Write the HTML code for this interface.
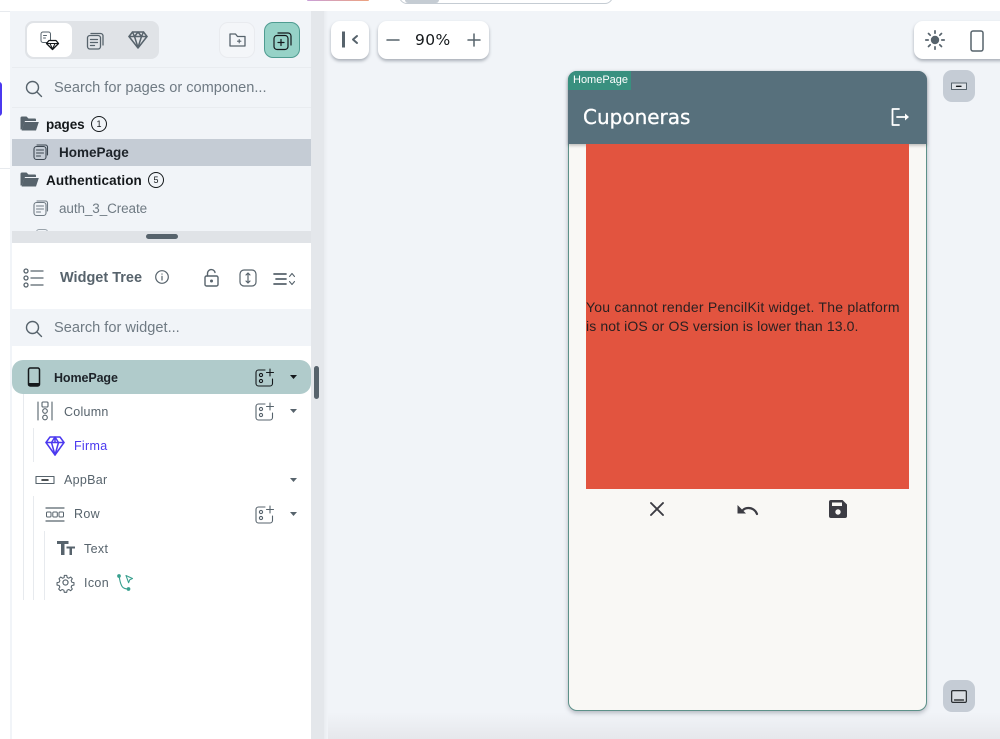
<!DOCTYPE html>
<html lang="en">
<head>
<meta charset="utf-8">
<title>Cuponeras</title>
<style>
html,body{margin:0;padding:0;}
body{width:1000px;height:739px;position:relative;overflow:hidden;background:#f1f4f8;font-family:"Liberation Sans",sans-serif;color:#14181b;}
.a{position:absolute;}
.t{position:absolute;white-space:nowrap;line-height:1;}
svg{position:absolute;overflow:visible;fill:none;stroke-linecap:round;stroke-linejoin:round;}
.card{position:absolute;background:#fff;border-radius:9px;box-shadow:0 2px 3px rgba(60,70,85,.4);}
</style>
</head>
<body>
<!-- top bar -->
<div class="a" style="left:0;top:0;width:1000px;height:11px;background:#fff"></div>
<div class="a" style="left:307px;top:0;width:62px;height:1px;background:linear-gradient(90deg,#c9a0d8,#eda27f);border-radius:0 0 5px 5px"></div>
<div class="a" style="left:399px;top:-12px;width:214px;height:16px;border:1px solid #c5ccd3;border-radius:9px;background:#fff;box-sizing:border-box"></div>
<div class="a" style="left:405px;top:0;width:34px;height:3px;background:#c5ccd3;border-radius:0 0 6px 6px"></div>
<!-- left rail -->
<div class="a" style="left:0;top:0;width:10px;height:739px;background:#fff"></div>
<div class="a" style="left:10px;top:11px;width:2px;height:728px;background:#f1f4f8"></div>
<div class="a" style="left:-6px;top:82px;width:8px;height:34px;background:#4b39ef;border-radius:3px"></div>
<div class="a" style="left:0;top:11px;width:10px;height:1px;background:#e7eaee"></div>
<div class="a" style="left:0;top:168px;width:10px;height:1px;background:#e7eaee"></div>
<div class="t" style="left:-3px;top:175px;font-size:11px;color:#333">t</div>
<!-- panel top -->
<div class="a" style="left:12px;top:11px;width:299px;height:232px;background:#f1f4f8"></div>
<div class="a" style="left:12px;top:67px;width:299px;height:1px;background:#e9ecf0"></div>
<div class="a" style="left:12px;top:107px;width:299px;height:1px;background:#e9ecf0"></div>
<!-- tab group -->
<div class="a" style="left:25px;top:21px;width:134px;height:38px;background:#e0e3e7;border-radius:8px"></div>
<div class="a" style="left:27px;top:23px;width:45px;height:34px;background:#fff;border-radius:7px"></div>
<svg style="left:40px;top:31px" width="20" height="20" viewBox="0 0 20 20" stroke="#57636c" stroke-width="1">
 <rect x="1" y="1" width="9.5" height="10.5" rx="2"/><path d="M3.500 4.500h3M3.500 7h2"/>
 <path d="M9 9.500h7l2.500 3-6 6-6-6z" stroke="#14181b" fill="#fff" stroke-width="1.300"/><path d="M6.500 12.500h12M10 12.500l2.500 5.500 2.500-5.500" stroke="#14181b"/>
</svg>
<svg style="left:86px;top:31px" width="20" height="20" viewBox="0 0 20 20" stroke="#57636c" stroke-width="1.300">
 <path d="M5 2.500h9.500a2.500 2.500 0 0 1 2.500 2.500v9"/><rect x="1.500" y="4.500" width="13" height="13.500" rx="2.500"/><path d="M4.500 8.500h7M4.500 11.500h7M4.500 14.500h4"/>
</svg>
<svg style="left:128px;top:31px" width="20" height="18" viewBox="0 0 20 18" stroke="#57636c" stroke-width="1.500">
 <path d="M4.500 1h11l3.500 4.500-9 11.500-9-11.500z"/><path d="M1 5.500h18M6.500 5.500l3.500 11 3.500-11M4.500 1l2 4.500 3.500-4.500 3.500 4.500 2-4.500"/>
</svg>
<!-- folder plus -->
<div class="a" style="left:219px;top:22px;width:36px;height:36px;box-sizing:border-box;border:1px solid #e9ebef;border-radius:9px;background:#f4f6f9"></div>
<svg style="left:229px;top:33px" width="17" height="14" viewBox="0 0 17 14" stroke="#57636c" stroke-width="1.300">
 <path d="M1 1h5.500l2 2.500H16v9.500H1z"/><path d="M8.500 8.200h3.400M10.200 6.500v3.400" stroke-width="1.100"/>
</svg>
<!-- page plus -->
<div class="a" style="left:264px;top:22px;width:36px;height:36px;box-sizing:border-box;border:1.500px solid #4f9c91;border-radius:9px;background:#96d2c7"></div>
<svg style="left:273px;top:32px" width="19" height="18" viewBox="0 0 19 18" stroke="#14181b" stroke-width="1.200">
 <path d="M5 1h10a3 3 0 0 1 3 3v9"/><rect x="1" y="3.500" width="14" height="14" rx="3"/><path d="M5 10.500h6M8 7.500v6"/>
</svg>
<!-- search -->
<svg style="left:25px;top:80px" width="18" height="18" viewBox="0 0 18 18" stroke="#57636c" stroke-width="1.400"><circle cx="7.500" cy="7.500" r="6"/><path d="M12 12l4.500 4.500"/></svg>
<div class="t" style="left:54px;top:81px;font-size:14.600px;color:#6f7a83">Search for pages or componen...</div>
<!-- pages tree -->
<svg style="left:20px;top:116px" width="19" height="15" viewBox="0 0 19 15"><path d="M0.500 2a1.500 1.500 0 0 1 1.500-1.500h4.500l2 2h6.500a1 1 0 0 1 1 1v1.500H5l-3 8.500h-1.500z" fill="#57636c"/><path d="M4.500 6h14.300l-2.800 8.500H1.600z" fill="#57636c"/></svg>
<div class="t" style="left:46px;top:118px;font-size:13.500px;font-weight:bold;color:#14181b;letter-spacing:-.1px">pages</div>
<div class="a" style="left:91px;top:116px;width:16px;height:16px;box-sizing:border-box;border:1.200px solid #14181b;border-radius:50%;font-size:9px;line-height:14px;text-align:center">1</div>
<div class="a" style="left:12px;top:139px;width:299px;height:27px;background:#c5ccd5"></div>
<svg style="left:33px;top:144px" width="16" height="16" viewBox="0 0 16 16" stroke="#3c4650" stroke-width="1.100"><path d="M4 1h8.500a2 2 0 0 1 2 2v8"/><rect x="1" y="2.500" width="12" height="13" rx="2.500"/><path d="M3.500 6h7M3.500 9h7M3.500 12h4"/></svg>
<div class="t" style="left:59px;top:146px;font-size:13.500px;font-weight:bold;color:#1d2329">HomePage</div>
<svg style="left:20px;top:172px" width="19" height="15" viewBox="0 0 19 15"><path d="M0.500 2a1.500 1.500 0 0 1 1.500-1.500h4.500l2 2h6.500a1 1 0 0 1 1 1v1.500H5l-3 8.500h-1.500z" fill="#57636c"/><path d="M4.500 6h14.300l-2.800 8.500H1.600z" fill="#57636c"/></svg>
<div class="t" style="left:46px;top:174px;font-size:13.500px;font-weight:bold;color:#14181b;letter-spacing:.1px">Authentication</div>
<div class="a" style="left:148px;top:172px;width:16px;height:16px;box-sizing:border-box;border:1.200px solid #14181b;border-radius:50%;font-size:9px;line-height:14px;text-align:center">5</div>
<svg style="left:33px;top:200px" width="16" height="16" viewBox="0 0 16 16" stroke="#6f7a83" stroke-width="1.100"><path d="M4 1h8.500a2 2 0 0 1 2 2v8"/><rect x="1" y="2.500" width="12" height="13" rx="2.500"/><path d="M3.500 6h7M3.500 9h7M3.500 12h4"/></svg>
<div class="t" style="left:59px;top:202px;font-size:13.500px;color:#6f7a83;letter-spacing:-.1px">auth_3_Create</div>
<div class="a" style="left:36px;top:229px;width:12px;height:4px;box-sizing:border-box;border:1px solid #9aa3ab;border-bottom:0;border-radius:3px 3px 0 0"></div>
<!-- divider -->
<div class="a" style="left:12px;top:231px;width:299px;height:12px;background:#e0e3e7"></div>
<div class="a" style="left:146px;top:234px;width:32px;height:5px;background:#57636c;border-radius:3px"></div>
<!-- panel bottom -->
<div class="a" style="left:12px;top:243px;width:299px;height:496px;background:#fff"></div>
<!-- widget tree head -->
<svg style="left:23px;top:268px" width="21" height="20" viewBox="0 0 21 20" stroke="#57636c" stroke-width="1.300"><circle cx="3" cy="3" r="2"/><circle cx="3" cy="10" r="2"/><circle cx="3" cy="17" r="2"/><path d="M8 3h12M8 10h12M8 17h12"/></svg>
<div class="t" style="left:60px;top:271px;font-size:14.500px;font-weight:bold;color:#57636c;letter-spacing:0">Widget Tree</div>
<svg style="left:155px;top:270px" width="14" height="14" viewBox="0 0 14 14" stroke="#57636c" stroke-width="1.200"><circle cx="7" cy="7" r="6.300"/><path d="M7 6.300v3.700M7 4v.1"/></svg>
<svg style="left:204px;top:269px" width="15" height="18" viewBox="0 0 15 18" stroke="#57636c" stroke-width="1.400"><rect x="1" y="7" width="13" height="10" rx="1.500"/><path d="M3.500 7V4.500a3.800 3.800 0 0 1 7.500-1"/><circle cx="7.500" cy="12" r=".8" fill="#57636c"/></svg>
<svg style="left:239px;top:269px" width="18" height="18" viewBox="0 0 18 18" stroke="#57636c" stroke-width="1.200"><rect x="1" y="1" width="16" height="16" rx="4"/><path d="M9 4v10M7 6l2-2 2 2M7 12l2 2 2-2"/></svg>
<svg style="left:273px;top:272px" width="22" height="14" viewBox="0 0 22 14" stroke="#57636c" stroke-width="1.700"><path d="M1 2h12M3 7h10M1 12h12"/><path d="M16.500 4.500l2.500-3 2.500 3M16.500 9.500l2.500 3 2.500-3" stroke-width="1.100"/></svg>
<!-- widget search -->
<div class="a" style="left:12px;top:309px;width:299px;height:37px;background:#f1f4f8"></div>
<svg style="left:25px;top:320px" width="18" height="18" viewBox="0 0 18 18" stroke="#57636c" stroke-width="1.400"><circle cx="7.500" cy="7.500" r="6"/><path d="M12 12l4.500 4.500"/></svg>
<div class="t" style="left:54px;top:321px;font-size:14.600px;color:#6f7a83">Search for widget...</div>
<!-- tree lines -->
<div class="a" style="left:23px;top:394px;width:1px;height:206px;background:#e7eaee"></div>
<div class="a" style="left:33px;top:428px;width:1px;height:34px;background:#e7eaee"></div>
<div class="a" style="left:33px;top:496px;width:1px;height:104px;background:#e7eaee"></div>
<div class="a" style="left:44px;top:531px;width:1px;height:69px;background:#e7eaee"></div>
<!-- HomePage row -->
<div class="a" style="left:12px;top:360px;width:299px;height:34px;background:#b0cbcb;border-radius:11px"></div>
<svg style="left:27px;top:367px" width="14" height="20" viewBox="0 0 14 20"><rect x="1.500" y="1" width="11" height="18" rx="1.800" stroke="#14181b" stroke-width="1.500"/><path d="M1.500 16h11v1.500a1.500 1.500 0 0 1-1.500 1.500H3a1.500 1.500 0 0 1-1.500-1.500z" fill="#14181b"/></svg>
<div class="t" style="left:54px;top:372px;font-size:12.500px;font-weight:bold;color:#1d2329;letter-spacing:-.1px">HomePage</div>
<!-- add widget icons -->
<svg style="left:255px;top:368px" width="19" height="19" viewBox="0 0 19 19" stroke="#14181b" stroke-width="1.100"><path d="M10 2H3.500A2.500 2.500 0 0 0 1 4.500v11A2.500 2.500 0 0 0 3.500 18H15a2.500 2.500 0 0 0 2.500-2.500V11"/><circle cx="6" cy="7" r="1.600"/><circle cx="6" cy="13" r="1.600"/><path d="M15 1v7M11.500 4.500h7"/></svg>
<svg style="left:255px;top:402px" width="19" height="19" viewBox="0 0 19 19" stroke="#57636c" stroke-width="1.100"><path d="M10 2H3.500A2.500 2.500 0 0 0 1 4.500v11A2.500 2.500 0 0 0 3.500 18H15a2.500 2.500 0 0 0 2.500-2.500V11"/><circle cx="6" cy="7" r="1.600"/><circle cx="6" cy="13" r="1.600"/><path d="M15 1v7M11.500 4.500h7"/></svg>
<svg style="left:255px;top:505px" width="19" height="19" viewBox="0 0 19 19" stroke="#57636c" stroke-width="1.100"><path d="M10 2H3.500A2.500 2.500 0 0 0 1 4.500v11A2.500 2.500 0 0 0 3.500 18H15a2.500 2.500 0 0 0 2.500-2.500V11"/><circle cx="6" cy="7" r="1.600"/><circle cx="6" cy="13" r="1.600"/><path d="M15 1v7M11.500 4.500h7"/></svg>
<!-- carets -->
<svg style="left:290px;top:375px" width="7" height="4" viewBox="0 0 7 4"><path d="M0 0h7L3.500 4z" fill="#14181b"/></svg>
<svg style="left:290px;top:409px" width="7" height="4" viewBox="0 0 7 4"><path d="M0 0h7L3.500 4z" fill="#57636c"/></svg>
<svg style="left:290px;top:478px" width="7" height="4" viewBox="0 0 7 4"><path d="M0 0h7L3.500 4z" fill="#57636c"/></svg>
<svg style="left:290px;top:512px" width="7" height="4" viewBox="0 0 7 4"><path d="M0 0h7L3.500 4z" fill="#57636c"/></svg>
<!-- Column -->
<svg style="left:37px;top:401px" width="16" height="20" viewBox="0 0 16 20" stroke="#57636c" stroke-width="1.100"><path d="M1 1v18M15 1v18"/><rect x="5" y="1" width="6" height="5" rx="1"/><circle cx="8" cy="10" r="2.300"/><circle cx="8" cy="16.500" r="2.300"/></svg>
<div class="t" style="left:64px;top:406px;font-size:12.500px;color:#57636c;letter-spacing:.25px">Column</div>
<!-- Firma -->
<svg style="left:45px;top:436px" width="20" height="20" viewBox="0 0 20 20" stroke="#4b39ef" stroke-width="1.500"><path d="M5 1h10l4 5.500-9 12.500L1 6.500z"/><path d="M1 6.500h18M6.500 6.500L10 19l3.500-12.500M10 1v5.500M6.500 6.500L10 1l3.500 5.500"/></svg>
<div class="t" style="left:74px;top:440px;font-size:12.500px;color:#4b39ef;letter-spacing:.3px">Firma</div>
<!-- AppBar -->
<svg style="left:35px;top:475px" width="20" height="10" viewBox="0 0 20 10"><rect x="1" y="1.500" width="18" height="7" stroke="#57636c" stroke-width="1.100"/><path d="M7 5h6" stroke="#14181b" stroke-width="1.500"/></svg>
<div class="t" style="left:64px;top:474px;font-size:12.500px;color:#57636c;letter-spacing:.3px">AppBar</div>
<!-- Row -->
<svg style="left:45px;top:507px" width="20" height="15" viewBox="0 0 20 15" stroke="#57636c" stroke-width="1"><path d="M1 1h18M1 14h18" stroke-width="1.200"/><rect x="1.500" y="5" width="4.500" height="5" rx="1"/><rect x="7.800" y="5" width="4.500" height="5" rx="1"/><rect x="14" y="5" width="4.500" height="5" rx="1"/></svg>
<div class="t" style="left:74px;top:508px;font-size:12.500px;color:#57636c;letter-spacing:.35px">Row</div>
<!-- Text -->
<svg style="left:57px;top:541px" width="18" height="14" viewBox="0 0 18 14"><path d="M0 0h11.500v3H7.500v11H4V3H0z" fill="#57636c"/><path d="M9.500 5.500h8.500v2h-3v6.500h-2.500V7.500h-3z" fill="#57636c"/></svg>
<div class="t" style="left:84px;top:543px;font-size:12.500px;color:#57636c;letter-spacing:.35px">Text</div>
<!-- Icon -->
<svg style="left:56px;top:573px" width="19" height="19" viewBox="0 0 24 24" stroke="#57636c" stroke-width="1.500"><circle cx="12" cy="12" r="3.200"/><path d="M10.300 2h3.400l.6 3 2.300 1 2.600-1.700 2.400 2.400-1.700 2.600 1 2.300 3 .6v3.400l-3 .6-1 2.300 1.700 2.600-2.400 2.400-2.600-1.700-2.300 1-.6 3h-3.400l-.6-3-2.300-1-2.600 1.700-2.400-2.400 1.700-2.600-1-2.300-3-.6v-3.400l3-.6 1-2.300L2.900 6.700l2.400-2.400 2.600 1.700 2.300-1z" transform="translate(1.200 1.200) scale(.9)"/></svg>
<div class="t" style="left:84px;top:577px;font-size:12.500px;color:#57636c;letter-spacing:.35px">Icon</div>
<svg style="left:117px;top:574px" width="17" height="17" viewBox="0 0 17 17" stroke="#39a08f" stroke-width="1.100"><circle cx="2" cy="2" r="1.300" fill="#39a08f"/><circle cx="11.500" cy="15" r="1.300" fill="#39a08f"/><path d="M2 2c1 4 1 8 3.500 11 1.500 1.700 3.500 2 6 2"/><path d="M9 1.500l6.500 3-2.700 1.200-1.200 3z"/></svg>
<!-- scrollbar / separator -->
<div class="a" style="left:311px;top:11px;width:13px;height:728px;background:#e4e7eb"></div>
<div class="a" style="left:324px;top:11px;width:4px;height:728px;background:linear-gradient(90deg,#e9ecf0,#f1f4f8)"></div>
<div class="a" style="left:314px;top:366px;width:5px;height:33px;background:#57636c;border-radius:3px"></div>
<!-- canvas bottom shade -->
<div class="a" style="left:328px;top:712px;width:672px;height:27px;background:linear-gradient(180deg,rgba(224,227,231,0),#e6e8ec)"></div>
<!-- top cards -->
<div class="card" style="left:331px;top:21px;width:38px;height:38px"></div>
<svg style="left:342px;top:31px" width="16" height="17" viewBox="0 0 16 17"><path d="M1.500 .5v16" stroke="#57636c" stroke-width="3" stroke-linecap="butt"/><path d="M15 5l-4 3.500 4 3.500" stroke="#57636c" stroke-width="2"/></svg>
<div class="card" style="left:378px;top:21px;width:111px;height:38px"></div>
<svg style="left:387px;top:34px" width="12" height="12" viewBox="0 0 12 12"><path d="M0 6h12" stroke="#57636c" stroke-width="1.500"/></svg>
<div class="t" style="left:415px;top:33px;color:#14181b;letter-spacing:.4px;font-family:'DejaVu Sans',sans-serif;font-size:15.500px">90%</div>
<svg style="left:468px;top:34px" width="12" height="12" viewBox="0 0 12 12"><path d="M0 6h12M6 0v12" stroke="#57636c" stroke-width="1.500"/></svg>
<div class="card" style="left:914px;top:21px;width:96px;height:38px"></div>
<svg style="left:925px;top:30px" width="20" height="20" viewBox="0 0 20 20" stroke="#57636c" stroke-width="1.700"><circle cx="10" cy="10" r="4.200" fill="#57636c" stroke="none"/><path d="M10 .8v2.400M10 16.800v2.400M.8 10h2.400M16.800 10h2.400M3.500 3.500l1.700 1.700M14.800 14.800l1.700 1.700M3.500 16.500l1.700-1.700M14.800 5.200l1.700-1.700"/></svg>
<svg style="left:970px;top:30px" width="14" height="22" viewBox="0 0 14 22"><rect x="1" y="1" width="12" height="20" rx="2" stroke="#57636c" stroke-width="1.500"/></svg>
<!-- side buttons -->
<div class="a" style="left:943px;top:70px;width:32px;height:32px;background:#c5ccd5;border-radius:9px"></div>
<svg style="left:951px;top:82px" width="16" height="9" viewBox="0 0 16 9"><rect x=".5" y="1" width="15" height="6.500" stroke="#57636c" stroke-width="1" fill="#dfe3e8"/><path d="M5.500 4.300h4.500" stroke="#14181b" stroke-width="1.300"/></svg>
<div class="a" style="left:943px;top:680px;width:32px;height:32px;background:#c5ccd5;border-radius:9px"></div>
<svg style="left:951px;top:690px" width="16" height="13" viewBox="0 0 16 13"><rect x=".7" y=".7" width="14.600" height="11.600" rx="1" stroke="#14181b" stroke-width="1.100" fill="#d9dde2"/><path d="M3.500 10h9" stroke="#14181b" stroke-width="1.300"/></svg>
<!-- phone -->
<div class="a" style="left:568px;top:71px;width:359px;height:640px;box-sizing:border-box;background:#f9f8f5;border:1.500px solid #5d9189;border-radius:9px;box-shadow:0 2px 5px rgba(60,70,85,.35)"></div>
<div class="a" style="left:568px;top:71px;width:359px;height:73px;background:#57707c;border-radius:9px 9px 0 0;box-shadow:0 1.500px 3px rgba(0,0,0,.25)"></div>
<div class="a" style="left:568px;top:71px;width:63px;height:19px;background:#39907f;border-radius:9px 0 0 0"></div>
<div class="t" style="left:573px;top:75px;font-size:11px;color:#fff">HomePage</div>
<div class="t" style="left:583px;top:107px;color:#fff;font-family:'DejaVu Sans',sans-serif;font-size:20px;-webkit-text-stroke:.3px #fff">Cuponeras</div>
<svg style="left:891px;top:108px" width="19" height="18" viewBox="0 0 19 18" stroke="#fff" stroke-width="1.800" stroke-linecap="butt" stroke-linejoin="miter"><path d="M8 1H1.500v16H8"/><path d="M6 9h10"/><path d="M14 5.500l4 3.500-4 3.500z" fill="#fff" stroke="none"/></svg>
<div class="a" style="left:586px;top:144px;width:323px;height:345px;background:#e2543f"></div>
<div class="a" style="left:586px;top:298px;width:330px;font-size:14px;line-height:19px;color:#2a2021;white-space:nowrap"><span style="letter-spacing:.23px">You cannot render PencilKit widget. The platform</span><br><span style="letter-spacing:.11px">is not iOS or OS version is lower than 13.0.</span></div>
<!-- drawing controls -->
<svg style="left:650px;top:502px" width="14" height="14" viewBox="0 0 14 14"><path d="M1 1l12 12M13 1L1 13" stroke="#3c3c43" stroke-width="1.900"/></svg>
<svg style="left:737px;top:503px" width="21" height="12" viewBox="0 0 21 12"><path d="M20 11c-1.500-4-5-6-8.500-6-2 0-4 .6-5.500 2" stroke="#3c3c43" stroke-width="2.200"/><path d="M.5 2v8.500H9z" fill="#3c3c43"/></svg>
<svg style="left:829px;top:500px" width="18" height="18" viewBox="0 0 18 18"><path d="M2 0h11.500L18 4.500V16a2 2 0 0 1-2 2H2a2 2 0 0 1-2-2V2a2 2 0 0 1 2-2z" fill="#3c3c43"/><rect x="3" y="2.500" width="10" height="3.500" fill="#f9f8f5"/><circle cx="9" cy="12" r="2.700" fill="#f9f8f5"/></svg>
</body>
</html>
